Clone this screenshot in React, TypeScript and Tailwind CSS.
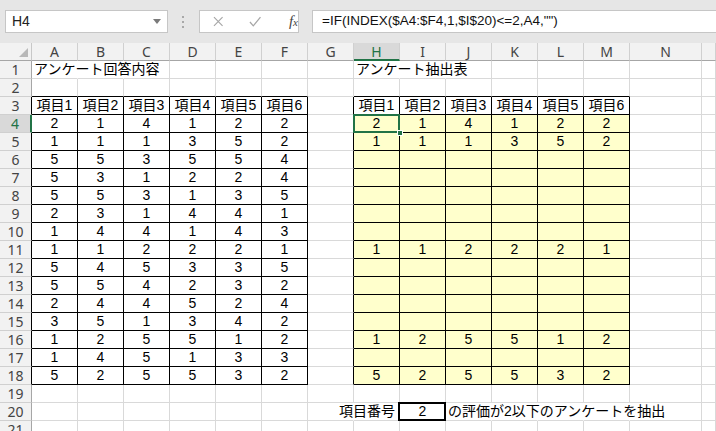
import React from "react";

const data: number[][] = [
  [2, 1, 4, 1, 2, 2],
  [1, 1, 1, 3, 5, 2],
  [5, 5, 3, 5, 5, 4],
  [5, 3, 1, 2, 2, 4],
  [5, 5, 3, 1, 3, 5],
  [2, 3, 1, 4, 4, 1],
  [1, 4, 4, 1, 4, 3],
  [1, 1, 2, 2, 2, 1],
  [5, 4, 5, 3, 3, 5],
  [5, 5, 4, 2, 3, 2],
  [2, 4, 4, 5, 2, 4],
  [3, 5, 1, 3, 4, 2],
  [1, 2, 5, 5, 1, 2],
  [1, 4, 5, 1, 3, 3],
  [5, 2, 5, 5, 3, 2],
];

const colLetters = ["A", "B", "C", "D", "E", "F", "G", "H", "I", "J", "K", "L", "M", "N", ""];
const rows = Array.from({ length: 21 }, (_, i) => i + 1);
const cols = Array.from({ length: 15 }, (_, i) => i);

const inLeft = (c: number) => c >= 0 && c <= 5;
const inRight = (c: number) => c >= 7 && c <= 12;

function cellContent(r: number, c: number): React.ReactNode {
  if (r === 1 && c === 0) return "アンケート回答内容";
  if (r === 1 && c === 7) return "アンケート抽出表";
  if (r === 3 && inLeft(c)) return `項目${c + 1}`;
  if (r === 3 && inRight(c)) return `項目${c - 6}`;
  if (r >= 4 && r <= 18 && inLeft(c)) return String(data[r - 4][c]);
  if (r >= 4 && r <= 18 && inRight(c)) {
    const row = data[r - 4];
    if (row[1] <= 2) return String(row[c - 7]);
    return "";
  }
  if (r === 20 && c === 7) return "項目番号";
  if (r === 20 && c === 8) return "2";
  if (r === 20 && c === 9) return "の評価が2以下のアンケートを抽出";
  return "";
}

function Cell({ r, c }: { r: number; c: number }) {
  const tableRow = r >= 3 && r <= 18;
  let right = "border-r-[#d9d9d9]";
  if (tableRow && (inLeft(c) || inRight(c) || c === 6)) right = "border-r-black";
  if (r === 1 && (c === 0 || c === 1 || c === 7 || c === 8)) right = "border-r-transparent";
  if (r === 20 && (c === 6 || c === 9 || c === 10 || c === 11 || c === 12)) right = "border-r-transparent";
  let bottom = "border-b-[#d9d9d9]";
  if (r >= 2 && r <= 18 && (inLeft(c) || inRight(c))) bottom = "border-b-black";
  const yellow = r >= 4 && r <= 18 && inRight(c);
  let align = "justify-center";
  if ((r === 1 && (c === 0 || c === 7)) || (r === 20 && c === 9)) align = "justify-start pl-[2px]";
  if (r === 20 && c === 7) align = "justify-end pr-[4px]";
  const content = cellContent(r, c);
  return (
    <div
      className={`relative flex items-center whitespace-nowrap border-r border-b ${right} ${bottom} ${align} ${
        yellow ? "bg-[#ffffcc]" : ""
      }`}
    >
      {content !== "" && <span className="leading-[17px]">{content}</span>}
      {r === 4 && c === 7 && (
        <>
          <div className="absolute left-[-1px] top-[-1px] right-[-1px] bottom-[-1px] border-2 border-[#217346] z-10" />
          <div className="absolute right-[-4px] bottom-[-4px] w-[6px] h-[6px] bg-[#217346] border border-white z-20" />
        </>
      )}
      {r === 20 && c === 8 && (
        <div className="absolute left-[-2px] top-[-1px] right-[-1px] bottom-[-1px] border-2 border-black z-10" />
      )}
    </div>
  );
}

export default function App() {
  return (
    <div
      className="w-[716px] h-[431px] overflow-hidden bg-white text-[14px] text-black"
      style={{ fontFamily: '"Liberation Sans", "Noto Sans CJK JP", sans-serif' }}
    >
      {/* Formula toolbar */}
      <div className="h-[43px] bg-[#e6e6e6] flex items-start pt-[10px]">
        <div className="ml-[5px] w-[163px] h-[23px] bg-white border border-[#c6c6c6] flex items-center justify-between pl-[6px] pr-[6px] text-[14px] text-[#222]">
          <span>H4</span>
          <svg width="8" height="5" viewBox="0 0 8 5">
            <path d="M0 0 L8 0 L4 5 Z" fill="#7a7a7a" />
          </svg>
        </div>
        <div className="ml-[13px] w-[4px] h-[23px] flex flex-col items-center justify-center gap-[3px]">
          <div className="w-[2px] h-[2px] bg-[#a8a8a8]" />
          <div className="w-[2px] h-[2px] bg-[#a8a8a8]" />
          <div className="w-[2px] h-[2px] bg-[#a8a8a8]" />
        </div>
        <div className="ml-[14px] w-[100px] h-[23px] bg-white border border-[#c6c6c6] flex items-center">
          <svg className="ml-[13px]" width="11" height="11" viewBox="0 0 11 11">
            <path d="M1 1 L10 10 M10 1 L1 10" stroke="#a6a6a6" strokeWidth="1.2" />
          </svg>
          <svg className="ml-[25px]" width="13" height="11" viewBox="0 0 13 11">
            <path d="M1 6 L4.5 10 L12 1" stroke="#a6a6a6" strokeWidth="1.3" fill="none" />
          </svg>
          <span
            className="ml-[28px] italic text-[#444] leading-none"
            style={{ fontFamily: '"Liberation Serif", serif' }}
          >
            <span className="text-[15px]">f</span>
            <span className="text-[11px]">x</span>
          </span>
        </div>
        <div className="ml-[13px] flex-1 h-[23px] bg-white border border-r-0 border-[#c6c6c6] flex items-center pl-[9px] text-[13.5px] text-[#111]">
          =IF(INDEX($A4:$F4,1,$I$20)&lt;=2,A4,&quot;&quot;)
        </div>
      </div>

      {/* Sheet */}
      <div className="grid grid-cols-[32px_repeat(13,46px)_72px_1fr] auto-rows-[18px]">
        {/* Column header row */}
        <div className="relative bg-[#f2f2f2] border-r border-b border-r-[#c8c8c8] border-b-[#a6a6a6]">
          <svg className="absolute right-[3px] bottom-[3px]" width="9" height="9" viewBox="0 0 9 9">
            <path d="M9 0 L9 9 L0 9 Z" fill="#b8b8b8" />
          </svg>
        </div>
        {cols.map((c) => (
          <div
            key={`h${c}`}
            className={`flex items-center justify-center text-[14px] border-r border-b border-r-[#d0d0d0] ${
              c === 7
                ? "bg-[#d9d9d9] text-[#217346] border-b-2 border-b-[#217346]"
                : "bg-[#f2f2f2] text-[#444] border-b-[#a6a6a6]"
            }`}
            style={{ fontFamily: '"Noto Sans", sans-serif' }}
          >
            {colLetters[c]}
          </div>
        ))}
        {rows.map((r) => (
          <React.Fragment key={`r${r}`}>
            <div
              className={`flex items-center justify-center text-[14px] border-b border-b-[#d0d0d0] ${
                r === 4
                  ? "bg-[#d9d9d9] text-[#217346] border-r-2 border-r-[#217346]"
                  : r >= 3 && r <= 18
                  ? "bg-[#f2f2f2] text-[#444] border-r border-r-black"
                  : "bg-[#f2f2f2] text-[#444] border-r border-r-[#a6a6a6]"
              }`}
              style={{ fontFamily: '"Noto Sans", sans-serif' }}
            >
              {r}
            </div>
            {cols.map((c) => (
              <Cell key={`c${r}-${c}`} r={r} c={c} />
            ))}
          </React.Fragment>
        ))}
      </div>
    </div>
  );
}
